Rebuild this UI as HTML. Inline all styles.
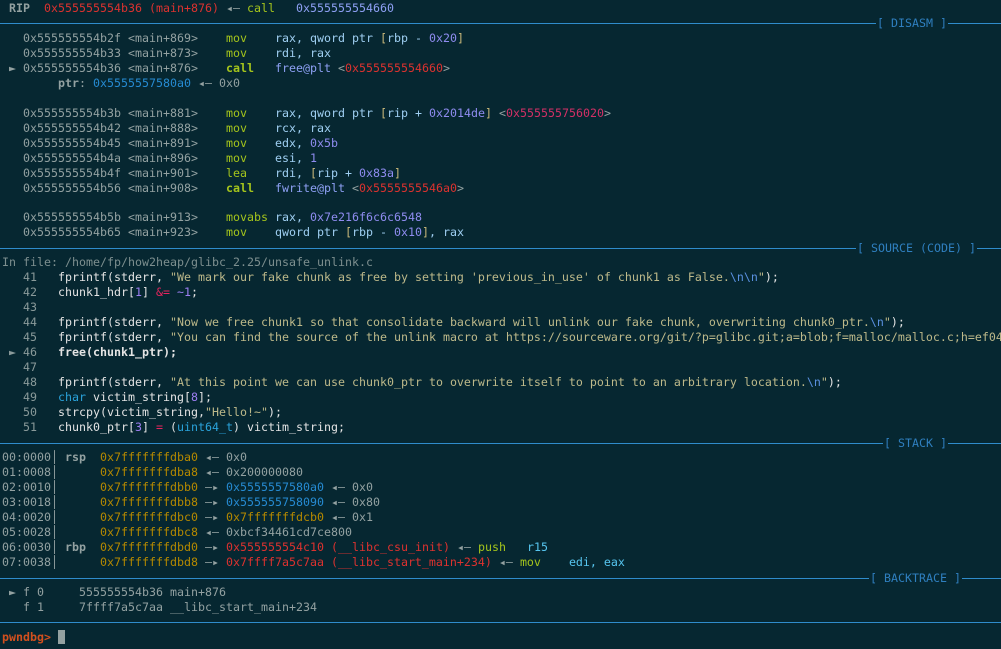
<!DOCTYPE html>
<html><head><meta charset="utf-8"><style>
html,body{margin:0;padding:0;background:#062731;width:1001px;height:649px;overflow:hidden}
body{font-family:"DejaVu Sans Mono","Liberation Mono",monospace;font-size:11.63px;color:#93a1a1;position:relative}
.r{position:absolute;left:2px;white-space:pre;line-height:15px;height:15px}
.sep{position:absolute;left:0;width:1001px;height:1px;background:#2f8ccb}
.lab{position:absolute;white-space:pre;line-height:15px;color:#2f7fbf;background:#062731;padding:0 1px}
.g{color:#93a1a1}.b{font-weight:bold}
.red{color:#dc322f}.grn{color:#a4c41c}.lav{color:#8ea0f4}.blu{color:#268bd2}
.op{color:#9fcff2}.num{color:#8f8cf0}.br{color:#c8b87a}.mag{color:#d33066}
.w{color:#e4e4e4}.str{color:#bdb98a}.esc{color:#5a90e0}.pk{color:#e8245e}.pu{color:#9d7ff2}
.kw{color:#2aa3db}.yel{color:#b58900}.cy{color:#57c6f0}.ln{color:#8a9a9a}
.pr{color:#d2501e;font-weight:bold}
</style></head><body>
<div class="r" style="top:1px"> <span class="b">RIP</span>  <span class="red">0x555555554b36 (main+876)</span> ◂— <span class="grn">call</span>   <span class="lav">0x555555554660</span></div>
<div class="sep" style="top:23px"></div><div class="lab" style="top:16px;left:876px">[ DISASM ]</div>
<div class="r" style="top:31px">   0x555555554b2f &lt;main+869&gt;    <span class="grn">mov</span>    <span class="op">rax, qword ptr </span><span class="br">[</span><span class="op">rbp - </span><span class="num">0x20</span><span class="br">]</span></div>
<div class="r" style="top:46px">   0x555555554b33 &lt;main+873&gt;    <span class="grn">mov</span>    <span class="op">rdi, rax</span></div>
<div class="r" style="top:61px"> ► 0x555555554b36 &lt;main+876&gt;    <span class="grn b">call</span>   <span class="lav">free@plt</span> &lt;<span class="red">0x555555554660</span>&gt;</div>
<div class="r" style="top:76px">        <span class="b">ptr</span>: <span class="blu">0x5555557580a0</span> ◂— 0x0</div>
<div class="r" style="top:106px">   0x555555554b3b &lt;main+881&gt;    <span class="grn">mov</span>    <span class="op">rax, qword ptr </span><span class="br">[</span><span class="op">rip + </span><span class="num">0x2014de</span><span class="br">]</span> &lt;<span class="mag">0x555555756020</span>&gt;</div>
<div class="r" style="top:121px">   0x555555554b42 &lt;main+888&gt;    <span class="grn">mov</span>    <span class="op">rcx, rax</span></div>
<div class="r" style="top:136px">   0x555555554b45 &lt;main+891&gt;    <span class="grn">mov</span>    <span class="op">edx, </span><span class="num">0x5b</span></div>
<div class="r" style="top:151px">   0x555555554b4a &lt;main+896&gt;    <span class="grn">mov</span>    <span class="op">esi, </span><span class="num">1</span></div>
<div class="r" style="top:166px">   0x555555554b4f &lt;main+901&gt;    <span class="grn">lea</span>    <span class="op">rdi, </span><span class="br">[</span><span class="op">rip + </span><span class="num">0x83a</span><span class="br">]</span></div>
<div class="r" style="top:181px">   0x555555554b56 &lt;main+908&gt;    <span class="grn b">call</span>   <span class="lav">fwrite@plt</span> &lt;<span class="red">0x5555555546a0</span>&gt;</div>
<div class="r" style="top:210px">   0x555555554b5b &lt;main+913&gt;    <span class="grn">movabs</span> <span class="op">rax, </span><span class="num">0x7e216f6c6c6548</span></div>
<div class="r" style="top:225px">   0x555555554b65 &lt;main+923&gt;    <span class="grn">mov</span>    <span class="op">qword ptr </span><span class="br">[</span><span class="op">rbp - </span><span class="num">0x10</span><span class="br">]</span><span class="op">, rax</span></div>
<div class="sep" style="top:248px"></div><div class="lab" style="top:241px;left:856px">[ SOURCE (CODE) ]</div>
<div class="r" style="top:255px;color:#7d8f8f">In file: /home/fp/how2heap/glibc_2.25/unsafe_unlink.c</div>
<div class="r" style="top:270px"><span class="ln">   41</span>   <span class="w">fprintf(stderr, </span><span class="str">"We mark our fake chunk as free by setting 'previous_in_use' of chunk1 as False.<span class="esc">\n\n</span>"</span><span class="w">);</span></div>
<div class="r" style="top:285px"><span class="ln">   42</span>   <span class="w">chunk1_hdr[</span><span class="pu">1</span><span class="w">] </span><span class="pk">&amp;=</span> <span class="pu">~1</span><span class="w">;</span></div>
<div class="r" style="top:300px"><span class="ln">   43</span></div>
<div class="r" style="top:315px"><span class="ln">   44</span>   <span class="w">fprintf(stderr, </span><span class="str">"Now we free chunk1 so that consolidate backward will unlink our fake chunk, overwriting chunk0_ptr.<span class="esc">\n</span>"</span><span class="w">);</span></div>
<div class="r" style="top:330px"><span class="ln">   45</span>   <span class="w">fprintf(stderr, </span><span class="str">"You can find the source of the unlink macro at https://sourceware.org/git/?p=glibc.git;a=blob;f=malloc/malloc.c;h=ef04360b9</span></div>
<div class="r" style="top:345px"><span class="ln"> ► 46</span>   <span class="w b">free(chunk1_ptr);</span></div>
<div class="r" style="top:360px"><span class="ln">   47</span></div>
<div class="r" style="top:375px"><span class="ln">   48</span>   <span class="w">fprintf(stderr, </span><span class="str">"At this point we can use chunk0_ptr to overwrite itself to point to an arbitrary location.<span class="esc">\n</span>"</span><span class="w">);</span></div>
<div class="r" style="top:390px"><span class="ln">   49</span>   <span class="kw">char</span><span class="w"> victim_string[</span><span class="pu">8</span><span class="w">];</span></div>
<div class="r" style="top:405px"><span class="ln">   50</span>   <span class="w">strcpy(victim_string,</span><span class="str">"Hello!~"</span><span class="w">);</span></div>
<div class="r" style="top:420px"><span class="ln">   51</span>   <span class="w">chunk0_ptr[</span><span class="pu">3</span><span class="w">] </span><span class="pk">=</span><span class="w"> (</span><span class="kw">uint64_t</span><span class="w">) victim_string;</span></div>
<div class="sep" style="top:443px"></div><div class="lab" style="top:436px;left:883px">[ STACK ]</div>
<div class="r" style="top:450px">00:0000│ <span class="b">rsp</span>  <span class="yel">0x7fffffffdba0</span> ◂— 0x0</div>
<div class="r" style="top:465px">01:0008│      <span class="yel">0x7fffffffdba8</span> ◂— 0x200000080</div>
<div class="r" style="top:480px">02:0010│      <span class="yel">0x7fffffffdbb0</span> —▸ <span class="blu">0x5555557580a0</span> ◂— 0x0</div>
<div class="r" style="top:495px">03:0018│      <span class="yel">0x7fffffffdbb8</span> —▸ <span class="blu">0x555555758090</span> ◂— 0x80</div>
<div class="r" style="top:510px">04:0020│      <span class="yel">0x7fffffffdbc0</span> —▸ <span class="yel">0x7fffffffdcb0</span> ◂— 0x1</div>
<div class="r" style="top:525px">05:0028│      <span class="yel">0x7fffffffdbc8</span> ◂— 0xbcf34461cd7ce800</div>
<div class="r" style="top:540px">06:0030│ <span class="b">rbp</span>  <span class="yel">0x7fffffffdbd0</span> —▸ <span class="red">0x555555554c10 (__libc_csu_init)</span> ◂— <span class="grn">push</span>   <span class="cy">r15</span></div>
<div class="r" style="top:555px">07:0038│      <span class="yel">0x7fffffffdbd8</span> —▸ <span class="red">0x7ffff7a5c7aa (__libc_start_main+234)</span> ◂— <span class="grn">mov</span>    <span class="cy">edi, eax</span></div>
<div class="sep" style="top:578px"></div><div class="lab" style="top:571px;left:869px">[ BACKTRACE ]</div>
<div class="r" style="top:585px"> ► f 0     555555554b36 main+876</div>
<div class="r" style="top:600px">   f 1     7ffff7a5c7aa __libc_start_main+234</div>
<div class="sep" style="top:622px"></div>
<div class="r" style="top:630px"><span class="pr">pwndbg&gt;</span> <span style="display:inline-block;width:7px;height:14px;background:#93a1a1;vertical-align:-3px"></span></div>
</body></html>
